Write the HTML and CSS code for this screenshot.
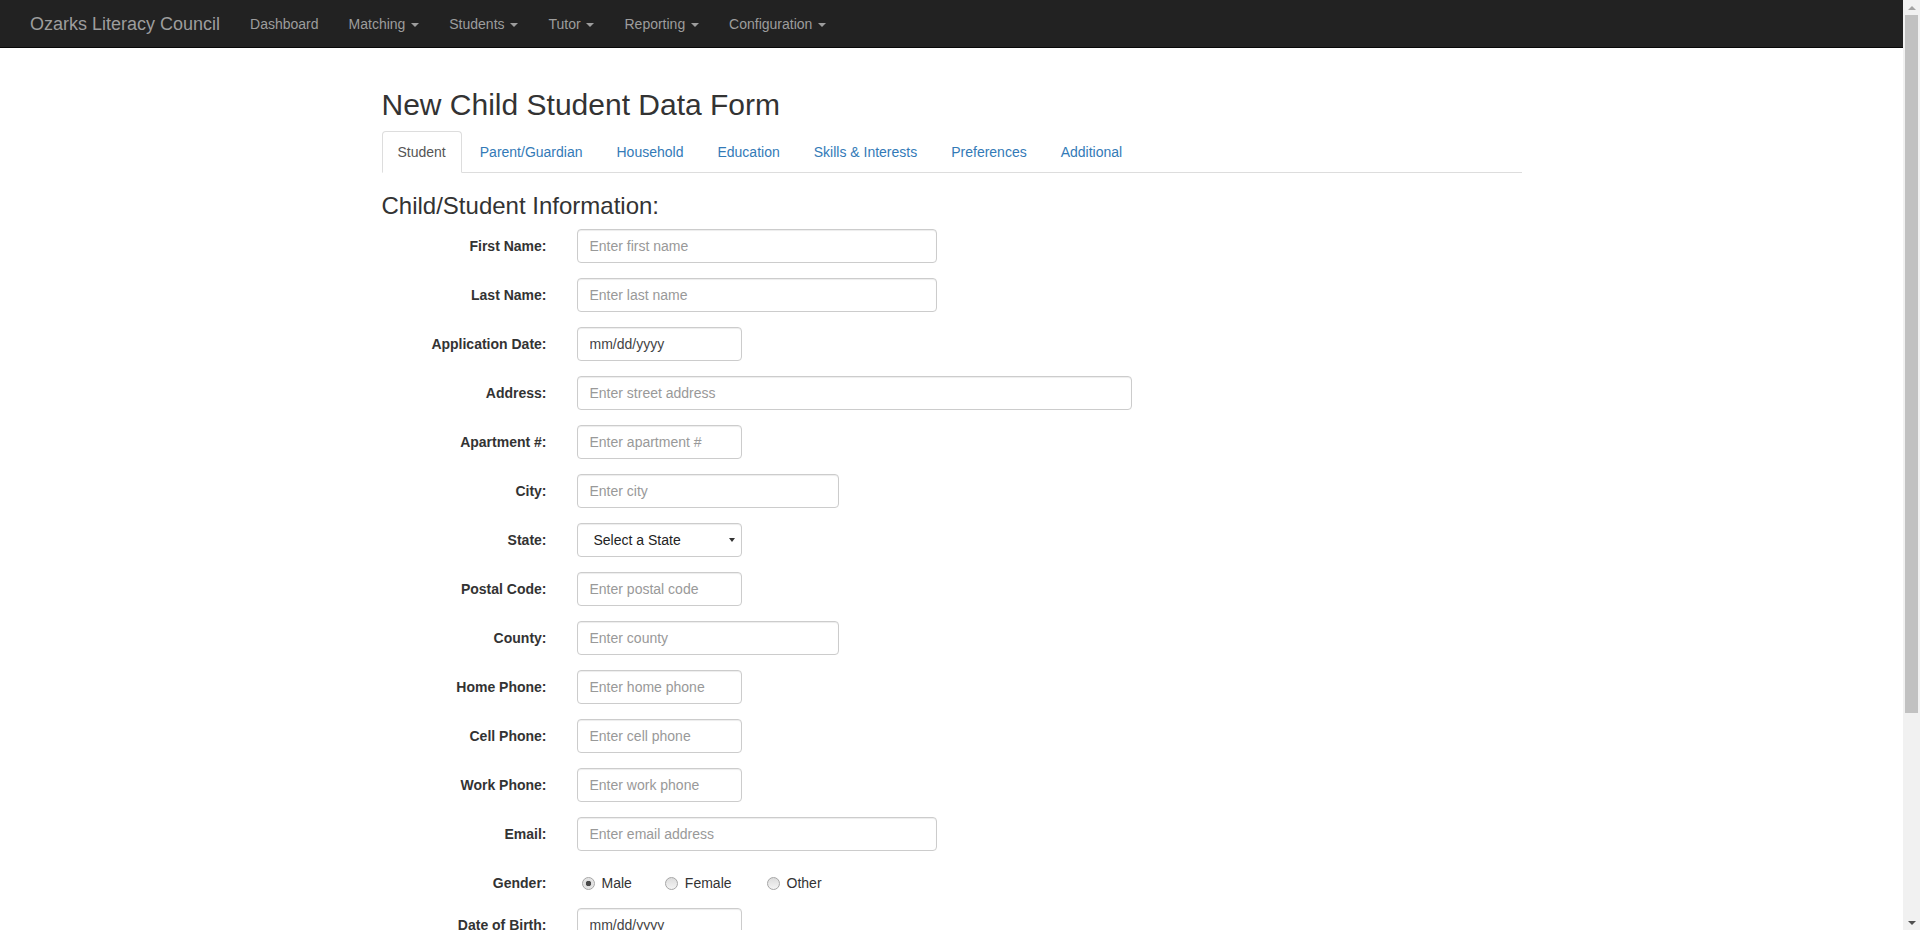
FILE: index.html
```html
<!DOCTYPE html>
<html lang="en">
<head>
<meta charset="utf-8">
<title>New Child Student Data Form</title>
<link rel="stylesheet" href="styles.css">
</head>
<body>
<div class="window">
  <div class="viewport">
    <nav class="navbar">
      <div class="navbar-inner">
        <a class="brand" href="#">Ozarks Literacy Council</a>
        <ul class="nav">
          <li><a href="#">Dashboard</a></li>
          <li><a href="#">Matching <span class="caret"></span></a></li>
          <li><a href="#">Students <span class="caret"></span></a></li>
          <li><a href="#">Tutor <span class="caret"></span></a></li>
          <li><a href="#">Reporting <span class="caret"></span></a></li>
          <li><a href="#">Configuration <span class="caret"></span></a></li>
        </ul>
      </div>
    </nav>

    <div class="container">
      <h2 class="page-title">New Child Student Data Form</h2>
      <ul class="tabs">
        <li class="active"><a href="#">Student</a></li>
        <li><a href="#">Parent/Guardian</a></li>
        <li><a href="#">Household</a></li>
        <li><a href="#">Education</a></li>
        <li><a href="#">Skills &amp; Interests</a></li>
        <li><a href="#">Preferences</a></li>
        <li><a href="#">Additional</a></li>
      </ul>

      <h3 class="section-title">Child/Student Information:</h3>

      <form class="form">
        <div class="form-group">
          <label class="control-label">First Name:</label>
          <div class="field"><input class="form-control w4" type="text" placeholder="Enter first name"></div>
        </div>
        <div class="form-group">
          <label class="control-label">Last Name:</label>
          <div class="field"><input class="form-control w4" type="text" placeholder="Enter last name"></div>
        </div>
        <div class="form-group">
          <label class="control-label">Application Date:</label>
          <div class="field"><input class="form-control w2 date" type="text" placeholder="mm/dd/yyyy"></div>
        </div>
        <div class="form-group">
          <label class="control-label">Address:</label>
          <div class="field"><input class="form-control w6" type="text" placeholder="Enter street address"></div>
        </div>
        <div class="form-group">
          <label class="control-label">Apartment #:</label>
          <div class="field"><input class="form-control w2" type="text" placeholder="Enter apartment #"></div>
        </div>
        <div class="form-group">
          <label class="control-label">City:</label>
          <div class="field"><input class="form-control w3" type="text" placeholder="Enter city"></div>
        </div>
        <div class="form-group">
          <label class="control-label">State:</label>
          <div class="field">
            <div class="select-wrap w2">
              <select class="form-control select">
                <option>Select a State</option>
              </select>
              <span class="select-arrow"></span>
            </div>
          </div>
        </div>
        <div class="form-group">
          <label class="control-label">Postal Code:</label>
          <div class="field"><input class="form-control w2" type="text" placeholder="Enter postal code"></div>
        </div>
        <div class="form-group">
          <label class="control-label">County:</label>
          <div class="field"><input class="form-control w3" type="text" placeholder="Enter county"></div>
        </div>
        <div class="form-group">
          <label class="control-label">Home Phone:</label>
          <div class="field"><input class="form-control w2" type="text" placeholder="Enter home phone"></div>
        </div>
        <div class="form-group">
          <label class="control-label">Cell Phone:</label>
          <div class="field"><input class="form-control w2" type="text" placeholder="Enter cell phone"></div>
        </div>
        <div class="form-group">
          <label class="control-label">Work Phone:</label>
          <div class="field"><input class="form-control w2" type="text" placeholder="Enter work phone"></div>
        </div>
        <div class="form-group">
          <label class="control-label">Email:</label>
          <div class="field"><input class="form-control w4" type="text" placeholder="Enter email address"></div>
        </div>
        <div class="form-group">
          <label class="control-label">Gender:</label>
          <div class="field radio-group">
            <label class="radio-opt"><input type="radio" name="gender" checked>Male</label>
            <label class="radio-opt"><input type="radio" name="gender">Female</label>
            <label class="radio-opt"><input type="radio" name="gender">Other</label>
          </div>
        </div>
        <div class="form-group">
          <label class="control-label">Date of Birth:</label>
          <div class="field"><input class="form-control w2 date" type="text" placeholder="mm/dd/yyyy"></div>
        </div>
      </form>
    </div>
  </div>

  <div class="scrollbar">
    <div class="sb-btn"><span class="sb-arrow-up"></span></div>
    <div class="sb-track"><div class="sb-thumb"></div></div>
    <div class="sb-btn"><span class="sb-arrow-down"></span></div>
  </div>
</div>
</body>
</html>
```

FILE: styles.css
```css
html, body {
  margin: 0;
  padding: 0;
  height: 100%;
  overflow: hidden;
}

body {
  font-family: "Liberation Sans", Arial, Helvetica, sans-serif;
  font-size: 14px;
  line-height: 1.42857;
  color: #333;
  background: #fff;
}

a {
  text-decoration: none;
}

.window {
  display: flex;
  height: 930px;
}

.viewport {
  flex: 1;
  min-width: 0;
  overflow: hidden;
}

/* ---------- Navbar ---------- */
.navbar {
  height: 48px;
  box-sizing: border-box;
  background: #222;
  border-bottom: 1px solid #080808;
}

.navbar-inner {
  display: flex;
  align-items: center;
  height: 100%;
  padding: 0 15px;
}

.brand {
  padding: 0 15px;
  font-size: 18px;
  line-height: 20px;
  color: #9d9d9d;
}

.nav {
  display: flex;
  list-style: none;
  margin: 0;
  padding: 0;
}

.nav a {
  display: block;
  padding: 0 15px;
  line-height: 20px;
  color: #9d9d9d;
}

.caret {
  display: inline-block;
  width: 0;
  height: 0;
  margin-left: 2px;
  vertical-align: middle;
  border-top: 4px solid #9d9d9d;
  border-left: 4px solid transparent;
  border-right: 4px solid transparent;
}

/* ---------- Page ---------- */
.container {
  width: 1170px;
  box-sizing: border-box;
  margin: 0 auto;
  padding: 20px 15px 0;
}

.page-title {
  font-size: 30px;
  font-weight: 500;
  line-height: 1.1;
  margin: 20px 0 10px;
}

.tabs {
  display: flex;
  list-style: none;
  margin: 0;
  padding: 0;
  border-bottom: 1px solid #ddd;
}

.tabs li {
  margin-bottom: -1px;
}

.tabs a {
  display: block;
  padding: 10px 15px;
  margin-right: 2px;
  line-height: 20px;
  color: #337ab7;
  border: 1px solid transparent;
  border-radius: 4px 4px 0 0;
}

.tabs .active a {
  color: #555;
  background: #fff;
  border-color: #ddd #ddd transparent;
}

.section-title {
  font-size: 24px;
  font-weight: 500;
  line-height: 1.1;
  margin: 20px 0 10px;
}

/* ---------- Form ---------- */
.form-group {
  display: flex;
  align-items: flex-start;
  margin: 0 -15px 15px;
}

.control-label {
  width: 195px;
  box-sizing: border-box;
  padding: 8px 15px 0;
  line-height: 19px;
  text-align: right;
  font-weight: bold;
  flex: none;
}

.field {
  padding: 0 15px;
}

.form-control {
  display: block;
  height: 34px;
  box-sizing: border-box;
  padding: 6px 12px;
  font-family: inherit;
  font-size: 14px;
  line-height: 1.42857;
  color: #555;
  background: #fff;
  border: 1px solid #ccc;
  border-radius: 4px;
  box-shadow: inset 0 1px 1px rgba(0, 0, 0, 0.075);
  margin: 0;
}

.form-control::placeholder {
  color: #999;
  opacity: 1;
}

.form-control.date::placeholder {
  color: #444;
}

.w2 { width: 165px; }
.w3 { width: 262.5px; }
.w4 { width: 360px; }
.w6 { width: 555px; }

.select-wrap {
  position: relative;
}

.select {
  width: 100%;
  -webkit-appearance: none;
  appearance: none;
  padding: 7px 12px 5px 16px;
  color: #222;
}

.select-arrow {
  position: absolute;
  right: 7px;
  top: 15px;
  width: 0;
  height: 0;
  border-top: 4px solid #333;
  border-left: 3px solid transparent;
  border-right: 3px solid transparent;
}

.radio-group {
  display: flex;
  padding-top: 7px;
  padding-left: 20px;
  line-height: 20px;
}

.radio-opt {
  display: flex;
  align-items: center;
  margin-right: 33px;
  color: #333;
}

.radio-opt:nth-child(2) {
  margin-right: 35px;
}

.radio-opt input {
  -webkit-appearance: none;
  appearance: none;
  width: 13px;
  height: 13px;
  margin: 0 7px 0 0;
  box-sizing: border-box;
  border: 1px solid #a6a6a6;
  border-radius: 50%;
  background: linear-gradient(#dcdcdc, #f4f4f4);
}

.radio-opt input:checked {
  background: radial-gradient(circle, #4a4a4a 0, #4a4a4a 2.5px, #dedede 3px, #f0f0f0 100%);
}

/* ---------- Fake classic scrollbar ---------- */
.scrollbar {
  width: 17px;
  flex: none;
  display: flex;
  flex-direction: column;
  background: #f1f1f1;
}

.sb-btn {
  height: 15px;
  display: flex;
  align-items: center;
  justify-content: center;
  flex: none;
}

.sb-arrow-up {
  width: 0;
  height: 0;
  border-bottom: 4px solid #a3a3a3;
  border-left: 4px solid transparent;
  border-right: 4px solid transparent;
}

.sb-arrow-down {
  width: 0;
  height: 0;
  border-top: 4px solid #505050;
  border-left: 4px solid transparent;
  border-right: 4px solid transparent;
}

.sb-track {
  flex: 1;
  padding: 0 2px;
}

.sb-thumb {
  height: 698px;
  background: #c1c1c1;
}
```
